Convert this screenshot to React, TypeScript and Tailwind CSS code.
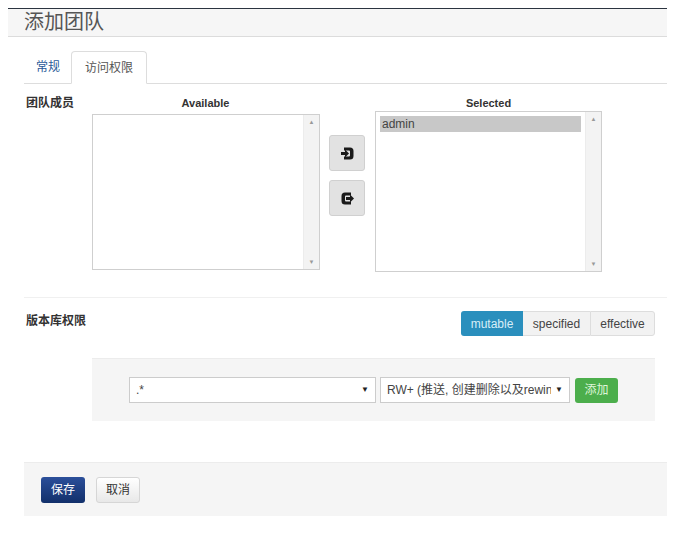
import React from "react";

const font = { fontFamily: '"Liberation Sans", Arial, "Noto Sans CJK SC", sans-serif' };

function ScrollBar() {
  return (
    <div className="flex w-[16px] flex-col items-center justify-between border-l border-[#ececec] bg-[#f3f3f3] py-[4px]">
      <span className="text-[6px] leading-none text-[#999]">▲</span>
      <span className="text-[6px] leading-none text-[#999]">▼</span>
    </div>
  );
}

function ListBox({ items, className }: { items: string[]; className: string }) {
  return (
    <div className={`flex border border-[#cfcfcf] bg-white ${className}`}>
      <div className="flex-1 p-[4px]">
        {items.map((it) => (
          <div key={it} className="bg-[#c8c8c8] px-[2px] text-[12px] leading-[16px] text-[#444]">
            {it}
          </div>
        ))}
      </div>
      <ScrollBar />
    </div>
  );
}

function MoveIcon({ dir }: { dir: "in" | "out" }) {
  return (
    <svg width="13" height="13" viewBox="0 0 13 12">
      {dir === "in" ? (
        <g fill="#1a1a1a">
          <path d="M3 0h6a3.5 3.5 0 0 1 3.5 3.5v5A3.5 3.5 0 0 1 9 12H3V9h5a1 1 0 0 0 1-1V4a1 1 0 0 0-1-1H3z" />
          <path d="M0 4.5h4V2l4 4-4 4V7.5H0z" />
        </g>
      ) : (
        <g fill="#1a1a1a">
          <path d="M10 0H4A3.5 3.5 0 0 0 .5 3.5v5A3.5 3.5 0 0 0 4 12h6V9H5a1 1 0 0 1-1-1V4a1 1 0 0 1 1-1h5z" />
          <path d="M5 4.5h4V2l4 4-4 4V7.5H5z" />
        </g>
      )}
    </svg>
  );
}

function Select({ value, className }: { value: string; className: string }) {
  return (
    <div className={`flex h-[26px] items-center border border-[#ccc] bg-white pl-[6px] pr-[6px] text-[12px] text-[#444] ${className}`}>
      <span className="flex-1 overflow-hidden whitespace-nowrap">{value}</span>
      <span className="ml-[4px] text-[8px] text-[#222]">▼</span>
    </div>
  );
}

export default function App() {
  return (
    <div className="min-h-[534px] w-[693px] bg-white" style={font}>
      <div className="pt-[8px]">
        <div className="ml-[8px] w-[659px] border-t border-[#2b3440] bg-[#f6f6f6] pb-[3px] pl-[16px] pt-[2px] border-b border-b-[#dcdcdc]">
          <h1 className="text-[20px] font-normal leading-[22px] text-[#555]">添加团队</h1>
        </div>
      </div>

      <div className="ml-[24px] w-[643px]">
        {/* tabs */}
        <div className="mt-[15px] flex h-[32px] items-end border-b border-[#ddd] pl-[1px]">
          <div className="flex h-[32px] items-center px-[11px] text-[12px] text-[#2a5a98]">常规</div>
          <div className="-mb-px flex h-[33px] items-center rounded-t-[4px] border border-b-white border-[#ddd] bg-white px-[13px] text-[12px] text-[#555]">
            访问权限
          </div>
        </div>

        {/* members */}
        <div className="relative flex pt-[12px]">
          <div className="w-[68px] pl-[2px] text-[12px] font-bold leading-[14px] text-[#333]">团队成员</div>
          <div className="flex flex-col">
            <div className="w-[227px] text-center text-[11px] font-bold leading-[14px] text-[#333]">Available</div>
            <ListBox items={[]} className="mt-[4px] h-[156px] w-[228px]" />
          </div>
          <div className="ml-[9px] mt-[39px] flex flex-col gap-[9px]">
            <button className="flex h-[36px] w-[36px] items-center justify-center rounded-[3px] border border-[#d0d0d0] bg-[#e2e2e2]">
              <MoveIcon dir="in" />
            </button>
            <button className="flex h-[36px] w-[36px] items-center justify-center rounded-[3px] border border-[#d0d0d0] bg-[#e2e2e2]">
              <MoveIcon dir="out" />
            </button>
          </div>
          <div className="ml-[10px] flex flex-col">
            <div className="w-[227px] text-center text-[11px] font-bold leading-[14px] text-[#333]">Selected</div>
            <ListBox items={["admin"]} className="mt-[1px] h-[161px] w-[227px]" />
          </div>
        </div>

        <div className="mt-[25px] border-t border-[#f0f0f0]" />

        {/* repo permissions */}
        <div className="flex items-start pt-[13px]">
          <div className="flex-1 pl-[2px] pt-[1px] text-[12px] font-bold text-[#333]">版本库权限</div>
          <div className="mr-[12px] flex h-[25px] text-[12px]">
            <div className="flex w-[62px] items-center justify-center rounded-l-[3px] bg-[#2a8fbd] text-[#d8eef8]">mutable</div>
            <div className="flex w-[67px] items-center justify-center border-y border-[#ddd] bg-[#f2f2f2] text-[#444]">specified</div>
            <div className="flex w-[65px] items-center justify-center rounded-r-[3px] border border-[#ddd] bg-[#f2f2f2] text-[#444]">effective</div>
          </div>
        </div>

        <div className="ml-[68px] mt-[22px] flex h-[63px] w-[563px] items-center border-t border-[#ececec] bg-[#f5f5f5] pl-[37px]">
          <Select value=".*" className="w-[247px]" />
          <Select value="RW+ (推送, 创建删除以及rewind)" className="ml-[4px] w-[190px]" />
          <button className="ml-[5px] flex h-[25px] w-[43px] items-center justify-center rounded-[3px] bg-[#4cae4c] text-[12px] text-[#dff5d8]">
            添加
          </button>
        </div>

        {/* footer */}
        <div className="mt-[41px] flex h-[54px] items-center gap-[11px] border-t border-[#ececec] bg-[#f5f5f5] pl-[17px]">
          <button className="flex h-[26px] w-[44px] items-center justify-center rounded-[3px] bg-gradient-to-b from-[#2b4f9a] to-[#12306b] text-[12px] text-white">
            保存
          </button>
          <button className="flex h-[26px] w-[44px] items-center justify-center rounded-[3px] border border-[#d6d6d6] bg-gradient-to-b from-white to-[#e8e8e8] text-[12px] text-[#333]">
            取消
          </button>
        </div>
      </div>
    </div>
  );
}
